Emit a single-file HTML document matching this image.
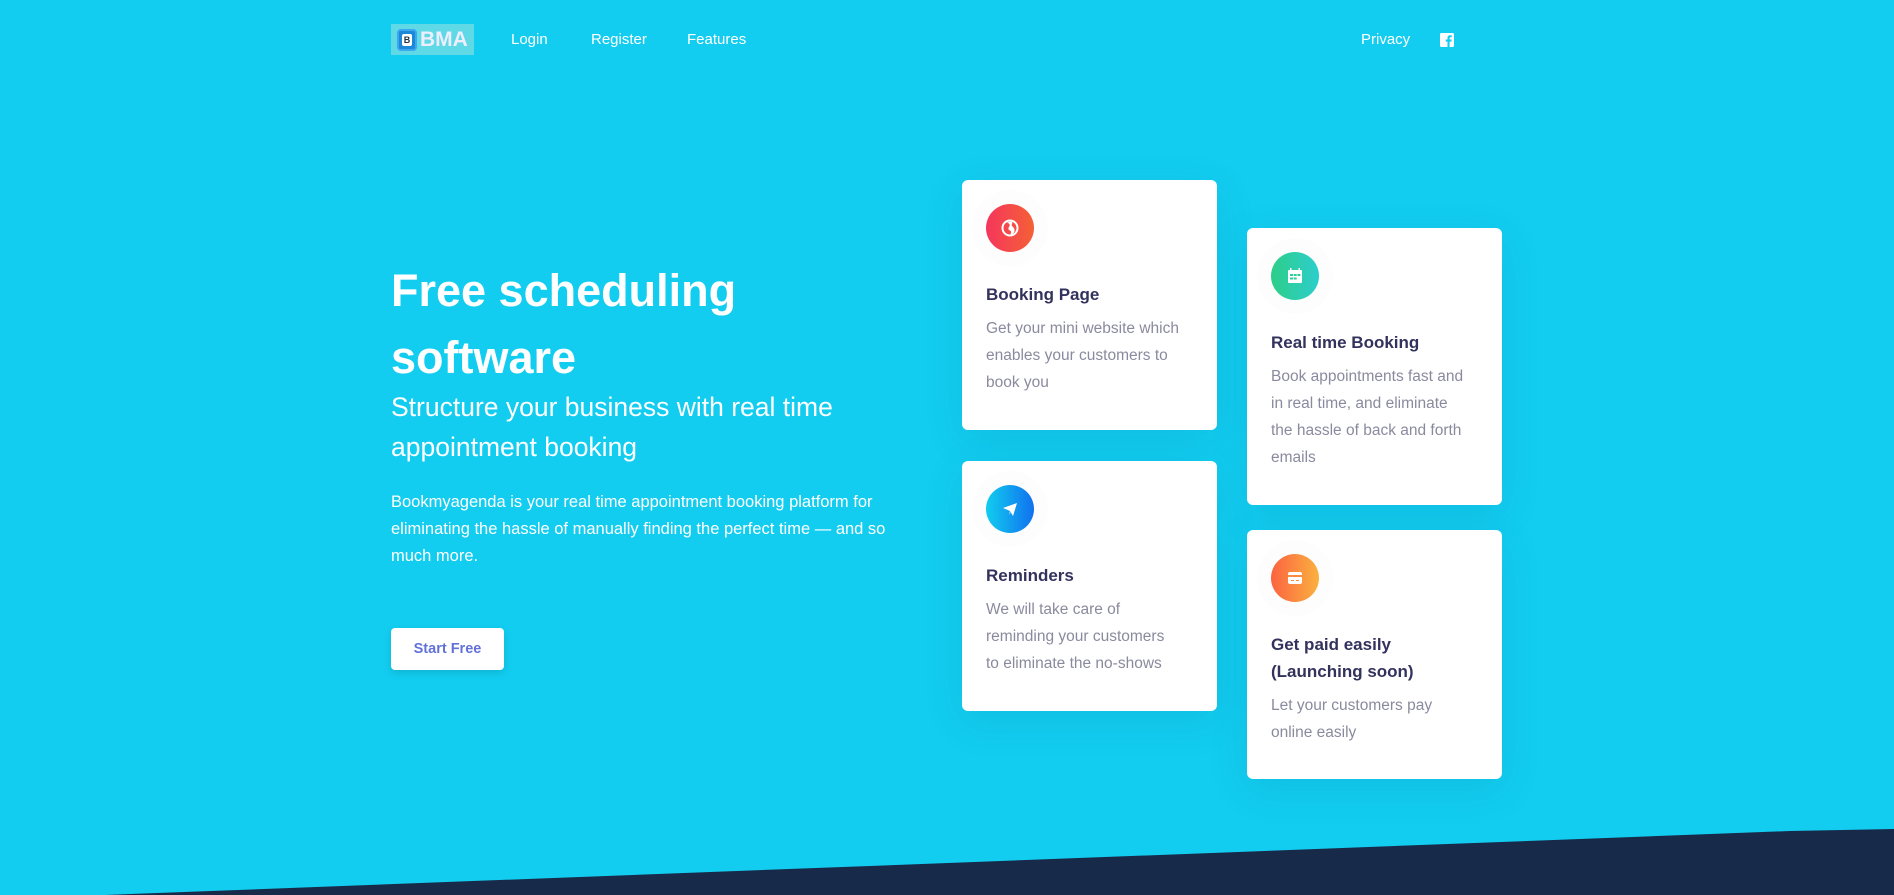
<!DOCTYPE html>
<html><head><meta charset="utf-8"><style>
*{margin:0;padding:0;box-sizing:border-box}
html,body{width:1894px;height:895px;overflow:hidden}
body{background:#12cdf0;font-family:"Liberation Sans",sans-serif;position:relative;color:#fff}
.nav a{position:absolute;top:31px;font-size:15px;color:#fff;text-decoration:none}
.logo{position:absolute;left:391px;top:24px;width:83px;height:31px;background:#5fd9e6;display:flex;align-items:center;padding-left:6px}
.logo .b{width:20px;height:22px;border:2px solid #3aa7f0;border-radius:4px;background:#1d88d8;display:flex;align-items:center;justify-content:center;font-weight:bold;font-size:11px;color:#fff}
.logo .b span{background:#fff;color:#234;width:10px;height:12px;display:flex;align-items:center;justify-content:center;border-radius:2px;font-size:9px}
.logo .t{font-weight:bold;font-size:21px;color:#eef;margin-left:3px;letter-spacing:0}
h1{position:absolute;left:391px;top:257px;font-size:45px;font-weight:600;line-height:67px;width:500px}
.sub{position:absolute;left:391px;top:387px;font-size:26.5px;font-weight:300;line-height:40px;width:470px}
.p{position:absolute;left:391px;top:489px;font-size:16.5px;line-height:27px;width:500px;font-weight:300}
.btn{position:absolute;left:391px;top:628px;width:113px;height:42px;background:#fff;border-radius:4px;color:#6272d8;font-weight:bold;font-size:14.5px;display:flex;align-items:center;justify-content:center;box-shadow:0 3px 8px rgba(0,0,0,.12)}
.card{position:absolute;width:255px;background:#fff;border-radius:6px;box-shadow:0 10px 40px rgba(0,80,120,.12);padding:24px 24px}
.ic{width:48px;height:48px;border-radius:50%;display:flex;align-items:center;justify-content:center;box-shadow:0 0 0 14px rgba(240,244,248,.15)}
.card h3{font-size:17px;font-weight:600;color:#32325d;margin-top:29px;line-height:27px}
.card p{font-size:15.5px;color:#8a8a9e;font-weight:300;line-height:27px;margin-top:7px;padding-right:14px}
.dark{position:absolute;left:0;top:0;width:1894px;height:895px}
</style></head><body>
<div class="logo"><div class="b"><span>B</span></div><div class="t">BMA</div></div>
<div class="nav">
<a style="left:511px">Login</a><a style="left:591px">Register</a><a style="left:687px">Features</a><a style="left:1361px">Privacy</a>
</div>
<svg style="position:absolute;left:1440px;top:33px" width="14" height="14" viewBox="0 0 14 14"><rect width="14" height="14" rx="1.5" fill="#fff"/><path d="M9.6 14V8.6h1.8l.3-2.1H9.6V5.2c0-.6.2-1 1-1h1.1V2.3c-.2 0-.9-.1-1.6-.1-1.6 0-2.6 1-2.6 2.7v1.6H5.7v2.1h1.8V14z" fill="#12cdf0"/></svg>
<h1>Free scheduling software</h1>
<div class="sub">Structure your business with real time appointment booking</div>
<div class="p">Bookmyagenda is your real time appointment booking platform for eliminating the hassle of manually finding the perfect time — and so much more.</div>
<div class="btn">Start Free</div>

<div class="card" style="left:962px;top:180px;height:250px">
<div class="ic" style="background:linear-gradient(90deg,#f5365c,#f56036)"><svg width="20" height="20" viewBox="0 0 20 20"><circle cx="10" cy="10" r="7.5" fill="none" stroke="#fff" stroke-width="2"/><path d="M7 5c2 0 3 1 2.5 3S8 9 8.5 11s2 1 2.5 2.5S10 17 10 17c2-.5 4-1.5 4.5-4S13 9 12 8s1-3 0-4c-2-1-4 0-5 1z" fill="#fff"/></svg></div>
<h3>Booking Page</h3><p>Get your mini website which enables your customers to book you</p></div>

<div class="card" style="left:962px;top:461px;height:250px">
<div class="ic" style="background:linear-gradient(90deg,#11cdef,#1171ef)"><svg width="20" height="20" viewBox="0 0 20 20"><path d="M3 9l14-5-4 13-3-5z" fill="#fff"/><path d="M10 12l-1 4 1.5-3z" fill="#fff"/></svg></div>
<h3>Reminders</h3><p>We will take care of reminding your customers to eliminate the no-shows</p></div>

<div class="card" style="left:1247px;top:228px;height:277px">
<div class="ic" style="background:linear-gradient(90deg,#2dce89,#2dcecc)"><svg width="20" height="20" viewBox="0 0 20 20"><rect x="3" y="4" width="14" height="13" rx="1" fill="#fff"/><rect x="5" y="2" width="1.5" height="3" fill="#fff"/><rect x="13.5" y="2" width="1.5" height="3" fill="#fff"/><g fill="#2dce9f"><rect x="5" y="8" width="3" height="2"/><rect x="8.7" y="8" width="3" height="2"/><rect x="12.4" y="8" width="3" height="2"/><rect x="5" y="11.5" width="3" height="2"/><rect x="8.7" y="11.5" width="3" height="2"/></g></svg></div>
<h3>Real time Booking</h3><p>Book appointments fast and in real time, and eliminate the hassle of back and forth emails</p></div>

<div class="card" style="left:1247px;top:530px;height:249px">
<div class="ic" style="background:linear-gradient(90deg,#fb6340,#fbb140)"><svg width="20" height="20" viewBox="0 0 20 20"><rect x="3" y="4" width="14" height="12" rx="2" fill="#fff"/><rect x="3" y="7" width="14" height="2" fill="#fc8a40"/><rect x="6" y="12" width="3" height="1" fill="#fc8a40"/><rect x="11" y="12" width="3" height="1" fill="#fc8a40"/></svg></div>
<h3>Get paid easily (Launching soon)</h3><p>Let your customers pay online easily</p></div>

<svg class="dark" viewBox="0 0 1894 895"><polygon points="0,899 1790,831 1894,829 1894,895 0,895" fill="#182a4a"/></svg>
</body></html>
